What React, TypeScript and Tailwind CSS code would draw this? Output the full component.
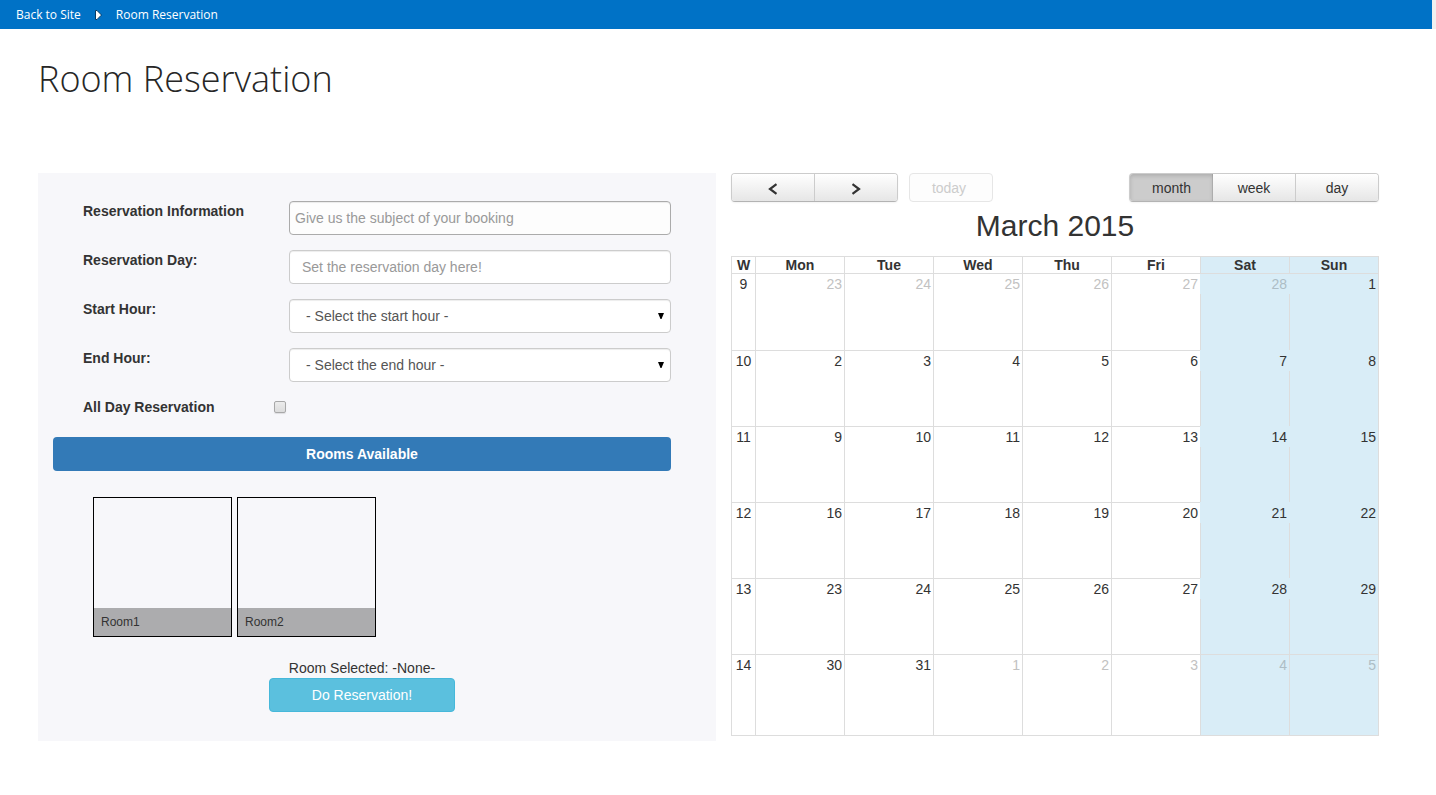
import { clsx } from "clsx";
import type { ReactNode } from "react";

const weekdays = ["Mon", "Tue", "Wed", "Thu", "Fri", "Sat", "Sun"];

const weeks = [
  { number: 9, days: [23, 24, 25, 26, 27, 28, 1] },
  { number: 10, days: [2, 3, 4, 5, 6, 7, 8] },
  { number: 11, days: [9, 10, 11, 12, 13, 14, 15] },
  { number: 12, days: [16, 17, 18, 19, 20, 21, 22] },
  { number: 13, days: [23, 24, 25, 26, 27, 28, 29] },
  { number: 14, days: [30, 31, 1, 2, 3, 4, 5] },
];

const fieldClass =
  "h-[34px] w-full rounded border border-[#cccccc] bg-white text-sm text-[#555555] shadow-[inset_0_1px_1px_rgba(0,0,0,0.075)] outline-none placeholder:text-[#999999]";

const raisedButton =
  "h-full border-[#cccccc] bg-linear-to-b from-white to-[#e6e6e6] text-center";

function isOtherMonth(week: number, day: number) {
  return (week === 0 && day > 7) || (week === 5 && day < 20);
}

function FormRow({ id, label, children }: { id: string; label: string; children: ReactNode }) {
  return (
    <div className="flex h-[34px] items-start">
      <label htmlFor={id} className="w-[206px] shrink-0 text-sm leading-5 font-bold">
        {label}
      </label>
      <div className="relative flex-1">{children}</div>
    </div>
  );
}

function HourSelect({ id, prompt }: { id: string; prompt: string }) {
  return (
    <>
      <select id={id} className={clsx(fieldClass, "appearance-none px-4")}>
        <option>{prompt}</option>
      </select>
      <svg className="pointer-events-none absolute top-[14px] right-[7px] h-[6px] w-[6px]" viewBox="0 0 6 6" aria-hidden="true">
        <path d="M0 0h6L3.5 6h-1z" fill="#000" />
      </svg>
    </>
  );
}

function Chevron({ left }: { left?: boolean }) {
  return (
    <svg className="mx-auto mt-[3px] h-3 w-3" viewBox="0 0 12 12" fill="none" stroke="#333" strokeWidth="2.2" aria-hidden="true">
      <path d={left ? "M9.5 1.2 3 6 9.5 10.8" : "M2.5 1.2 9 6 2.5 10.8"} />
    </svg>
  );
}

function ReservationForm() {
  return (
    <form className="bg-[#f7f7fa] pt-7 pr-[45px] pb-[29px] pl-[15px]">
      <div className="flex flex-col gap-[15px] pl-[30px]">
        <FormRow id="subject" label="Reservation Information">
          <input
            id="subject"
            placeholder="Give us the subject of your booking"
            className={clsx(fieldClass, "border-[#ababab]! bg-[#fdfdfd]! px-[5px]")}
          />
        </FormRow>
        <FormRow id="day" label="Reservation Day:">
          <input id="day" placeholder="Set the reservation day here!" className={clsx(fieldClass, "px-3")} />
        </FormRow>
        <FormRow id="start" label="Start Hour:">
          <HourSelect id="start" prompt="- Select the start hour -" />
        </FormRow>
        <FormRow id="end" label="End Hour:">
          <HourSelect id="end" prompt="- Select the end hour -" />
        </FormRow>
        <div className="flex h-5 items-center">
          <label htmlFor="allday" className="w-[191px] text-sm leading-5 font-bold">
            All Day Reservation
          </label>
          <input
            id="allday"
            type="checkbox"
            className="size-3 appearance-none rounded-xs border border-[#a8a8a8] bg-linear-to-b from-[#ececec] to-[#dcdcdc] shadow-[0_1px_1px_rgba(0,0,0,0.1)] checked:from-[#337ab7] checked:to-[#337ab7]"
          />
        </div>
      </div>

      <h2 className="mt-5 h-[34px] rounded bg-[#337ab7] text-center text-sm leading-[34px] font-bold text-white">
        Rooms Available
      </h2>

      <div className="mt-[26px] flex gap-[5px] pl-10">
        {["Room1", "Room2"].map((room) => (
          <button key={room} type="button" className="flex h-[140px] w-[139px] flex-col justify-end border border-black text-left">
            <span className="block h-7 w-full bg-[#acacae] px-[7px] text-xs leading-7">{room}</span>
          </button>
        ))}
      </div>

      <div className="mt-[21px] flex flex-col items-center">
        <p className="text-sm leading-5">Room Selected: -None-</p>
        <button type="button" className="h-[34px] w-[186px] rounded border border-[#46b8da] bg-[#5bc0de] text-sm text-white">
          Do Reservation!
        </button>
      </div>
    </form>
  );
}

function CalendarToolbar() {
  return (
    <div className="flex h-[29px] text-sm leading-5">
      <div className="flex overflow-hidden rounded border border-[#cccccc] border-b-[#b3b3b3] shadow-[0_1px_2px_rgba(0,0,0,0.05)]">
        <button type="button" aria-label="Previous month" className={clsx(raisedButton, "w-[82px]")}>
          <Chevron left />
        </button>
        <button type="button" aria-label="Next month" className={clsx(raisedButton, "w-[83px] border-l")}>
          <Chevron />
        </button>
      </div>
      <button type="button" disabled className="ml-[11px] w-[84px] rounded border border-[#e6e6e6] bg-[#fdfdfd] pr-1 text-[#cccccc]">
        today
      </button>
      <div className="ml-auto flex overflow-hidden rounded border border-[#cccccc] border-b-[#b3b3b3] shadow-[0_1px_2px_rgba(0,0,0,0.05)]">
        <button type="button" className="w-[83px] bg-[#cccccc] shadow-[inset_0_2px_4px_rgba(0,0,0,0.15),inset_-1px_0_0_#b8b8b8]">
          month
        </button>
        <button type="button" className={clsx(raisedButton, "w-[82px]")}>
          week
        </button>
        <button type="button" className={clsx(raisedButton, "w-[83px] border-l")}>
          day
        </button>
      </div>
    </div>
  );
}

function Calendar() {
  return (
    <section>
      <CalendarToolbar />
      <h2 className="mt-2 mb-[14px] text-center text-[30px] leading-8">March 2015</h2>
      <table className="w-full table-fixed border-separate border-spacing-0 border-r border-b border-[#dddddd] text-sm leading-4">
        <colgroup>
          <col className="w-6" />
          {weekdays.map((name) => (
            <col key={name} />
          ))}
        </colgroup>
        <thead>
          <tr className="h-[17px]">
            <th className="border-t border-l border-[#dddddd] p-0">W</th>
            {weekdays.map((name, i) => (
              <th key={name} className={clsx("border-t border-l border-[#dddddd] p-0", i > 4 && "bg-[#d9edf7]")}>
                {name}
              </th>
            ))}
          </tr>
        </thead>
        <tbody>
          {weeks.map((week, w) => (
            <tr key={week.number} className={w === 0 ? "h-[77px]" : w === 5 ? "h-[81px]" : "h-[76px]"}>
              <td className="border-t border-l border-[#dddddd] p-0 pt-[2px] text-center align-top">{week.number}</td>
              {week.days.map((day, d) => {
                const weekend = d > 4;
                const openTop = weekend && w < 5;
                return (
                  <td
                    key={d}
                    className={clsx(
                      "border-t p-0 text-right align-top",
                      weekend && "bg-[#d9edf7]",
                      openTop && w > 0 ? "border-[#d9edf7]" : "border-[#dddddd]",
                      !openTop && "border-l",
                    )}
                  >
                    <div className={clsx("h-5 pt-[2px] pr-[2px]", isOtherMonth(w, day) && (weekend ? "text-[#adbdc5]" : "text-[#c2c2c2]"))}>
                      {day}
                    </div>
                    {openTop && <div className={clsx("border-l border-[#dddddd]", w === 0 ? "h-14" : "h-[55px]")} />}
                  </td>
                );
              })}
            </tr>
          ))}
        </tbody>
      </table>
    </section>
  );
}

export default function App() {
  return (
    <div className="min-h-screen bg-white font-['Liberation_Sans',Arial,sans-serif] text-[#333333]">
      <header className="bg-[#f0f0f0] pr-1">
        <nav className="flex h-[29px] items-center bg-[#0072c6] pl-4 font-['Open_Sans',sans-serif] text-xs text-white">
          <a href="#site">Back to Site</a>
          <svg className="mr-[14px] ml-[13px] h-[10px] w-2" viewBox="0 0 8 10" aria-hidden="true">
            <path d="M1.5 0.5v9h1.5l4-4v-1l-4-4z" fill="#fff" stroke="#073a63" />
          </svg>
          <a href="#reservation">Room Reservation</a>
        </nav>
      </header>
      <main className="pt-6 pr-[57px] pb-[54px] pl-[38px]">
        <h1 className="font-['Open_Sans',sans-serif] text-4xl leading-[52px] font-light text-[#262626]">Room Reservation</h1>
        <div className="mt-[68px] grid grid-cols-[678fr_648fr] items-start gap-[15px]">
          <ReservationForm />
          <Calendar />
        </div>
      </main>
    </div>
  );
}
